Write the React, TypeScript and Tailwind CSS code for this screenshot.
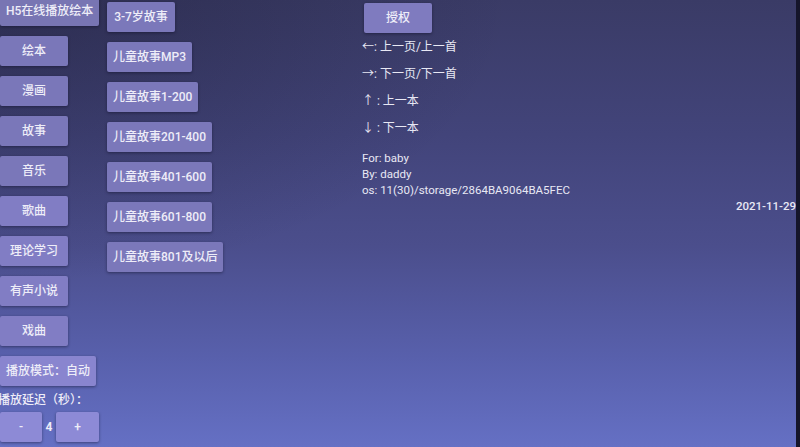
const font = { fontFamily: "Roboto, 'Noto Sans CJK SC', sans-serif" }

const TvButton = ({ label, className = "" }: { label: string; className?: string }) => {
  return (
    <button
      className={`h-[30px] min-w-[68px] shrink-0 px-[6px] rounded-[2px] text-[12px] font-medium text-[#eeedf8] shadow-[0_1px_3px_rgba(10,10,30,0.45)] whitespace-nowrap ${className}`}
    >
      {label}
    </button>
  )
}

const leftItems = ["绘本", "漫画", "故事", "音乐", "歌曲", "理论学习", "有声小说", "戏曲"]
const storyItems = [
  "3-7岁故事",
  "儿童故事MP3",
  "儿童故事1-200",
  "儿童故事201-400",
  "儿童故事401-600",
  "儿童故事601-800",
  "儿童故事801及以后",
]

const App = () => {
  return (
    <div
      style={font}
      className="relative w-[800px] h-[447px] overflow-hidden flex bg-[linear-gradient(180deg,#3a3b66_0%,#42447a_30%,#4b4e8c_55%,#5860ac_80%,#6570c4_100%)]"
    >
      {/* soft darker corner, left top */}
      <div className="pointer-events-none absolute inset-0 bg-[radial-gradient(ellipse_at_0%_0%,rgba(20,20,40,0.35),transparent_45%)]" />

      {/* Left column */}
      <div className="relative w-[107px] shrink-0 flex flex-col items-start gap-[10px] -mt-[4px]">
        <TvButton label="H5在线播放绘本" className="bg-[#7875b3]" />
        {leftItems.map((t, i) => (
          <TvButton key={t} label={t} className={i < 4 ? "bg-[#7a77b9]" : "bg-[#817dc4]"} />
        ))}
        <TvButton label="播放模式：自动" className="bg-[#8985cf]" />
        <div className="-mt-[6px] -ml-[2px] text-[12px] leading-[20px] text-[#eeedf8] whitespace-nowrap font-medium">
          播放延迟（秒）：
        </div>
        <div className="-mt-[8px] flex items-center">
          <TvButton label="-" className="!min-w-0 w-[42px] bg-[#8d8ad6]" />
          <span className="w-[14px] text-center text-[12px] font-bold text-[#eeedf8]">4</span>
          <TvButton label="+" className="!min-w-0 w-[43px] bg-[#8d8ad6]" />
        </div>
      </div>

      {/* Middle column */}
      <div className="relative w-[255px] shrink-0 flex flex-col items-start gap-[10px] mt-[2px]">
        {storyItems.map((t) => (
          <TvButton key={t} label={t} className="bg-[#7b78ba]" />
        ))}
      </div>

      {/* Right column */}
      <div className="relative flex-1 flex flex-col pt-[3px] text-[#e8e8f4]">
        <div className="pl-[2px]">
          <TvButton label="授权" className="bg-[#7f7bbf]" />
        </div>
        <div className="text-[12px] leading-[27px] mt-[1px]">
          <div>←: 上一页/上一首</div>
          <div>→: 下一页/下一首</div>
          <div>↑ : 上一本</div>
          <div>↓ : 下一本</div>
        </div>
        <div className="mt-[8px] text-[11.5px] leading-[16px]">
          <div>For: baby</div>
          <div>By: daddy</div>
          <div>os: 11(30)/storage/2864BA9064BA5FEC</div>
        </div>
        <div className="text-right text-[11.5px] leading-[16px] font-medium">2021-11-29</div>
      </div>

      {/* dark bezel on the right */}
      <div className="relative w-[4px] shrink-0 bg-[#15152a]" />
    </div>
  )
}

export default App
